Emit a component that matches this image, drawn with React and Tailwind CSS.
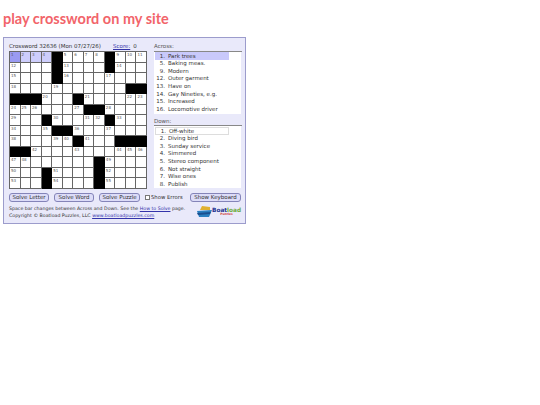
const grid = [
  "1 2 3 4 # 5 6 7 8 # 9 10 11",
  "12 . . . # 13 . . . # 14 . .",
  "15 . . . # 16 . . . 17 . . .",
  "18 . . . 19 . . . . . . # #",
  "# # # 20 . . # 21 . . . 22 23",
  "24 25 26 . . . 27 # # 28 . . .",
  "29 . . # 30 . . 31 32 # 33 . .",
  "34 . . 35 # # 36 . . 37 . . .",
  "38 . . . 39 40 # 41 . . # # #",
  "# # 42 . . . 43 . . . 44 45 46",
  "47 48 . . . . . . # 49 . . .",
  "50 . . # 51 . . . # 52 . . .",
  "53 . . # 54 . . . # 55 . . .",
].map((row) => row.split(" "));

const across = [
  "1. Park trees",
  "5. Baking meas.",
  "9. Modern",
  "12. Outer garment",
  "13. Have on",
  "14. Gay Nineties, e.g.",
  "15. Increased",
  "16. Locomotive driver",
];

const down = [
  "1. Off-white",
  "2. Diving bird",
  "3. Sunday service",
  "4. Simmered",
  "5. Stereo component",
  "6. Not straight",
  "7. Wise ones",
  "8. Publish",
];

const Cell = ({ value, row, col }) => {
  if (value === "#") return <div className="bg-black" />;
  const active = row === 0 && col < 4;
  const first = row === 0 && col === 0;
  return (
    <div
      className={`border-r border-b border-[#666] overflow-hidden pl-px text-[4px] leading-[6px] text-[#555] ${
        first ? "bg-[#9a9af2]" : active ? "bg-[#cdcdfb]" : "bg-white"
      }`}
    >
      {value !== "." ? value : ""}
    </div>
  );
};

const ClueList = ({ items, boxed }) => (
  <div className={`h-[62px] w-[87px] overflow-hidden bg-white pl-px ${boxed ? "pt-px" : ""}`}>
    {items.map((clue, i) => {
      const [num, ...rest] = clue.split(" ");
      let mark = "";
      if (i === 0) mark = boxed ? "border border-[#ddd]" : "bg-[#c9c9fb]";
      return (
        <div key={clue} className={`flex h-[7.6px] w-[74px] items-center ${mark}`}>
          <span className="w-[10px] text-right">{num}</span>
          <span className="ml-[3px] whitespace-nowrap">{rest.join(" ")}</span>
        </div>
      );
    })}
  </div>
);

const SolveButton = ({ label, width }) => (
  <button
    type="button"
    className={`h-[9px] ${width} rounded-[3px] border border-[#8484b8] bg-[#dcdcf8] text-[5.5px] leading-none text-[#333]`}
  >
    {label}
  </button>
);

const App = () => {
  return (
    <div className="h-[405px] w-[540px] overflow-hidden bg-white font-['DejaVu_Sans',sans-serif] text-[5.5px] text-[#333]">
      <h1 className="ml-[3px] pt-[10px] font-['Lato',sans-serif] text-[14.5px] leading-[18px] font-bold whitespace-nowrap text-[#f2646a]">
        play crossword on my site
      </h1>

      <div className="mt-[9px] ml-[3px] h-[187px] w-[243px] border border-[#9c9ccc] bg-[#e9e9fa] pt-[5px] pl-[5px]">
        <div className="flex">
          <div className="w-[145px]">
            <div className="flex h-[7px] items-center">
              <span className="w-[104px]">Crossword 32636 (Mon 07/27/26)</span>
              <span className="text-[#3333aa] underline">Score:</span>
              <span className="ml-[3px]">0</span>
            </div>
            <div className="mt-px grid h-[138px] w-[138px] grid-cols-13 grid-rows-13 border-t border-l border-[#666]">
              {grid.map((row, r) =>
                row.map((value, c) => <Cell key={`${r}-${c}`} value={value} row={r} col={c} />)
              )}
            </div>
          </div>

          <div className="w-[88px]">
            <div className="flex h-[7px] items-center text-[#555]">Across:</div>
            <div className="mt-px border-t border-[#888]">
              <ClueList items={across} />
            </div>
            <div className="mt-[4px] flex h-[7px] items-center text-[#555]">Down:</div>
            <div className="border-t border-[#888]">
              <ClueList items={down} boxed />
            </div>
          </div>
        </div>

        <div className="mt-[4px] flex items-center">
          <SolveButton label="Solve Letter" width="w-[40px]" />
          <span className="w-[5px]" />
          <SolveButton label="Solve Word" width="w-[40px]" />
          <span className="w-[5px]" />
          <SolveButton label="Solve Puzzle" width="w-[41px]" />
          <span className="ml-[5px] h-[5px] w-[5px] border border-[#777] bg-white" />
          <span className="ml-px w-[39px] text-[5.3px] whitespace-nowrap">Show Errors</span>
          <SolveButton label="Show Keyboard" width="w-[51px]" />
        </div>

        <div className="mt-[3px] flex items-start">
          <div className="w-[187px] text-[4.7px] leading-[7px] whitespace-nowrap">
            <div>
              Space bar changes between Across and Down. See the{" "}
              <span className="text-[#3333aa] underline">How to Solve</span> page.
            </div>
            <div>
              Copyright © Boatload Puzzles, LLC{" "}
              <span className="text-[#3333aa] underline">www.boatloadpuzzles.com</span>
            </div>
          </div>
          <div className="flex items-center">
            <svg width="17" height="13" viewBox="0 0 17 13">
              <path d="M6 1 L14 2 L14 5 L4 5 Z" fill="#e0b030" />
              <path d="M1 6 L16 5 L13 12 L3 12 Z" fill="#2a7fc0" />
              <path d="M1 8 L15 7 L14 9 L2 10 Z" fill="#1a4f90" />
            </svg>
            <div className="-ml-px flex flex-col items-center">
              <span className="text-[5.8px] leading-[6px] font-bold whitespace-nowrap">
                <span className="text-[#22338f]">Boat</span>
                <span className="text-[#6cab3a]">load</span>
              </span>
              <span className="text-[3px] leading-[3px] font-bold text-[#d04040]">Puzzles</span>
            </div>
          </div>
        </div>
      </div>
    </div>
  );
};

export default App;
